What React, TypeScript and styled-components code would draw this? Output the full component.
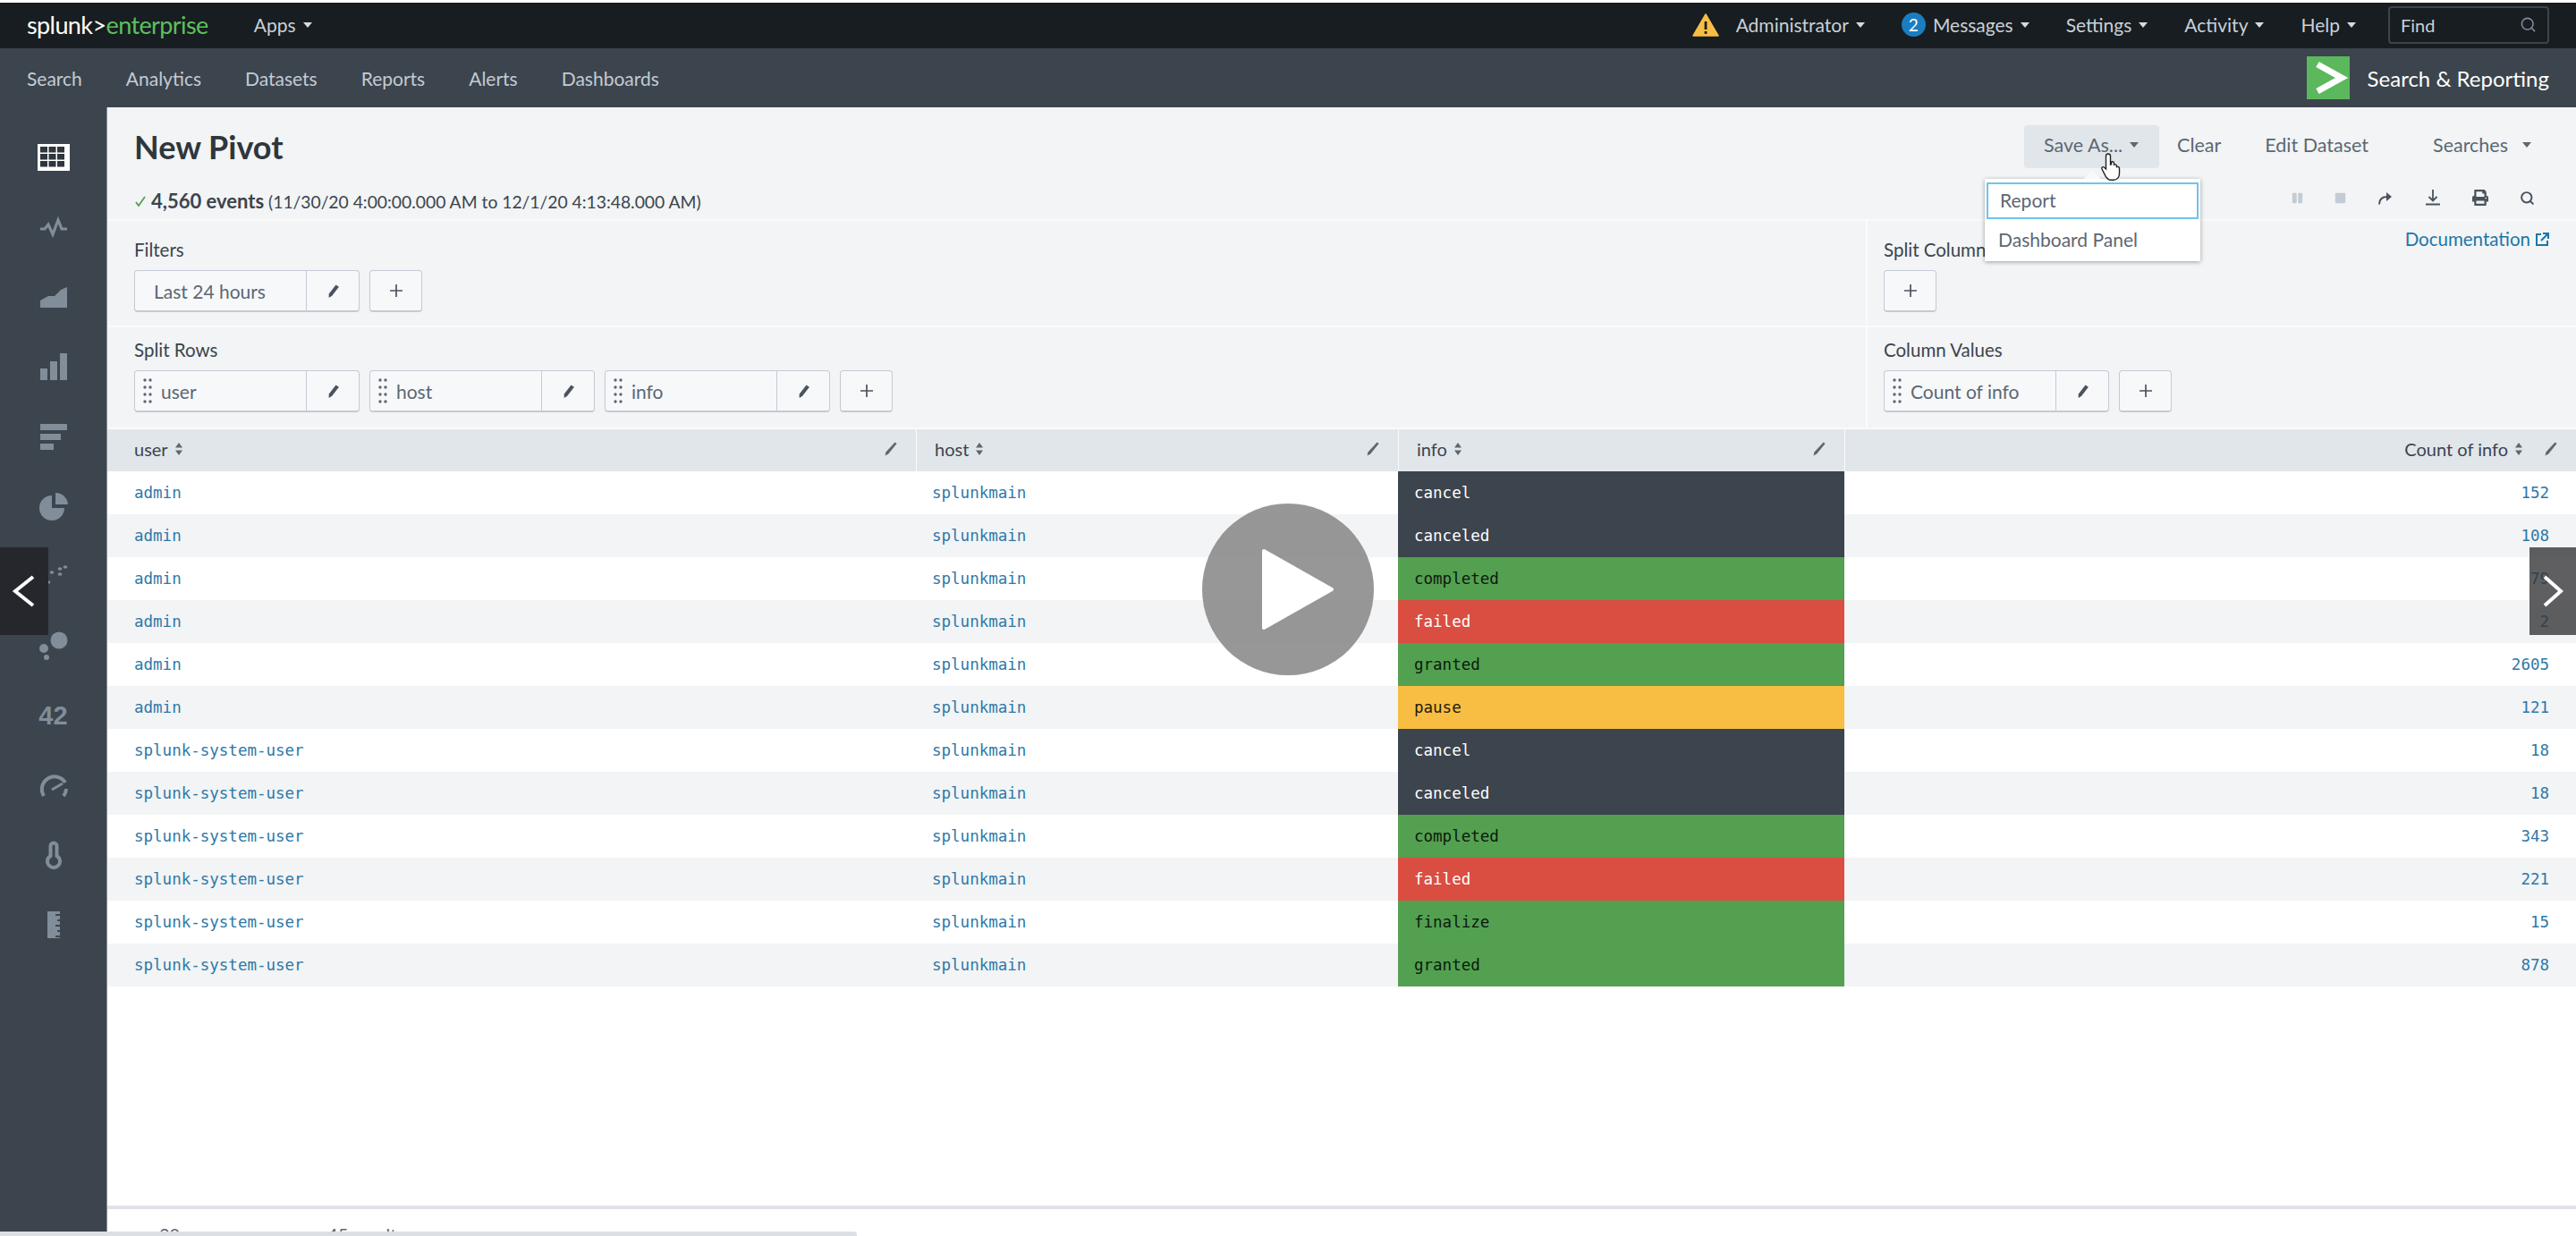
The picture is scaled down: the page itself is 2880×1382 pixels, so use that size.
import * as React from "react"
import styled, { createGlobalStyle } from "styled-components"
import { Search } from "lucide-react"
import { FaPause, FaStop, FaPrint } from "react-icons/fa"

const GlobalStyle = createGlobalStyle`
  html, body {
    margin: 0;
    padding: 0;
    background: #fff;
  }
  body {
    font-family: Lato, "Open Sans", "Liberation Sans", sans-serif;
    color: #3c444d;
  }
`

const Page = styled.div`
  position: relative;
  display: flex;
  flex-direction: column;
  width: 2880px;
  height: 1382px;
  padding-top: 3px;
  box-sizing: border-box;
  overflow: hidden;
  background: #fff;
`

const TopBar = styled.header`
  display: flex;
  align-items: center;
  flex: none;
  height: 51px;
  padding: 0 30px 2px 30px;
  box-sizing: border-box;
  background: #171d21;
  color: #c9d0d8;
  font-size: 21px;
`

const Logo = styled.div`
  font-size: 27px;
  letter-spacing: -0.6px;
  color: #fff;
  margin-right: 51px;
  & span {
    color: #5cc05c;
  }
`

const MenuItem = styled.div<{ $gap?: number }>`
  display: flex;
  align-items: center;
  gap: 8px;
  margin-right: ${p => p.$gap ?? 41}px;
`

const Caret = styled.i<{ $color?: string }>`
  display: inline-block;
  width: 0;
  height: 0;
  border-left: 5px solid transparent;
  border-right: 5px solid transparent;
  border-top: 6px solid ${p => p.$color ?? "#d5dae0"};
`

const Spacer = styled.div`
  flex: 1;
`

const Badge = styled.span`
  display: flex;
  align-items: center;
  justify-content: center;
  width: 27px;
  height: 27px;
  border-radius: 50%;
  background: #1a7dc0;
  color: #fff;
  font-size: 19px;
`

const FindBox = styled.div`
  display: flex;
  align-items: center;
  justify-content: space-between;
  width: 180px;
  height: 42px;
  padding: 0 12px;
  box-sizing: border-box;
  border: 2px solid #3c444d;
  border-radius: 4px;
  color: #c9d0d8;
  font-size: 20px;
`

const AppBar = styled.nav`
  display: flex;
  align-items: center;
  flex: none;
  height: 66px;
  padding: 0 30px;
  background: #3c444d;
  color: #c3cbd4;
  font-size: 21px;
`

const NavLink = styled.a`
  margin-right: 49px;
`

const AppTitle = styled.div`
  display: flex;
  align-items: center;
  gap: 20px;
  color: #fff;
  font-size: 24px;
`

const Body = styled.div`
  display: flex;
  flex: 1;
  min-height: 0;
`

const Rail = styled.aside`
  display: flex;
  flex-direction: column;
  align-items: center;
  flex: none;
  width: 120px;
  padding-top: 17px;
  box-sizing: border-box;
  background: #3c444d;
  border-right: 1px solid #8a929a;
`

const RailItem = styled.div`
  display: flex;
  align-items: center;
  justify-content: center;
  flex: none;
  width: 100%;
  height: 78px;
  color: #818d99;
`

const RailNumber = styled.span`
  font-family: "Liberation Sans", sans-serif;
  font-size: 29px;
  font-weight: 700;
`

const Main = styled.main`
  display: flex;
  flex-direction: column;
  flex: 1;
  min-width: 0;
`

const Header = styled.section`
  flex: none;
  height: 127px;
  padding: 20px 0 0 30px;
  box-sizing: border-box;
  background: #f2f4f5;
  border-bottom: 2px solid #fafbfb;
`

const HeaderRow = styled.div`
  display: flex;
  align-items: center;
  justify-content: space-between;
`

const Title = styled.h1`
  margin: 0;
  font-size: 36px;
  font-weight: 700;
  color: #2f363d;
`

const Actions = styled.div`
  display: flex;
  align-items: center;
  height: 48px;
  padding-right: 50px;
  font-size: 21.5px;
  color: #5c6773;
`

const SaveWrap = styled.div`
  position: relative;
`

const SaveButton = styled.button`
  display: flex;
  align-items: center;
  gap: 8px;
  width: 151px;
  height: 48px;
  padding: 0 0 4px 22px;
  border: 0;
  border-radius: 4px;
  background: #e1e6eb;
  font: inherit;
  color: inherit;
`

const ActionLink = styled.a<{ $left: number }>`
  display: flex;
  align-items: center;
  gap: 16px;
  margin-left: ${p => p.$left}px;
  padding-bottom: 4px;
`

const Menu = styled.div`
  position: absolute;
  top: 60px;
  left: -44px;
  z-index: 5;
  width: 241px;
  height: 92px;
  padding-top: 4px;
  box-sizing: border-box;
  background: #fff;
  box-shadow: 0 1px 5px rgba(0, 0, 0, 0.35);
  &::before {
    content: "";
    position: absolute;
    top: -9px;
    left: 110px;
    border-left: 10px solid transparent;
    border-right: 10px solid transparent;
    border-bottom: 9px solid #f8f9fa;
  }
`

const MenuEntry = styled.div<{ $focused?: boolean }>`
  display: flex;
  align-items: center;
  height: ${p => (p.$focused ? 41 : 46)}px;
  margin: 0 2px;
  padding: 0 0 2px 13px;
  box-sizing: border-box;
  font-size: 21px;
  color: #5c6773;
  border: ${p => (p.$focused ? "2px solid #6cc5ee" : "0")};
`

const Pointer = styled.svg`
  position: absolute;
  top: 30px;
  left: 85px;
  z-index: 6;
  width: 28px;
  height: 34px;
`

const StatusRow = styled.div`
  display: flex;
  justify-content: space-between;
`

const Status = styled.div`
  display: flex;
  align-items: center;
  gap: 5px;
  margin-top: 23px;
  font-size: 19.3px;
  color: #3c444d;
  & b {
    font-size: 22px;
    font-weight: 700;
  }
`

const JobIcons = styled.div`
  display: flex;
  align-items: center;
  height: 32px;
  padding-right: 28px;
  margin-top: 17px;
`

const JobIcon = styled.div<{ $muted?: boolean; $width?: number }>`
  display: flex;
  justify-content: center;
  width: ${p => p.$width ?? 53}px;
  color: ${p => (p.$muted ? "#c3cbd4" : "#4a535d")};
`

const PanelRow = styled.section<{ $height: number }>`
  display: flex;
  flex: none;
  height: ${p => p.$height}px;
  box-sizing: border-box;
  background: #f2f4f5;
  border-bottom: 2px solid #fafbfb;
`

const PanelLeft = styled.div<{ $top: number }>`
  flex: none;
  width: 1968px;
  padding: ${p => p.$top}px 0 0 30px;
  box-sizing: border-box;
  border-right: 2px solid #fafbfb;
`

const PanelRight = styled.div<{ $top: number }>`
  display: flex;
  justify-content: space-between;
  flex: 1;
  padding: ${p => p.$top}px 30px 0 18px;
`

const PanelLabel = styled.div`
  height: 24px;
  margin-bottom: 11px;
  font-size: 20.5px;
  line-height: 24px;
  color: #3c444d;
`

const DocLink = styled.a`
  display: flex;
  align-items: center;
  gap: 6px;
  height: 24px;
  margin-top: -12px;
  font-size: 20.5px;
  color: #1e76a8;
`

const PillRow = styled.div`
  display: flex;
  gap: 11px;
`

const Pill = styled.div<{ $width?: number }>`
  display: flex;
  align-items: stretch;
  width: ${p => p.$width ?? 252}px;
  height: 47px;
  box-sizing: border-box;
  background: #f7f8fa;
  border: 1px solid #c3cbd4;
  border-bottom-width: 2px;
  border-radius: 4px;
  font-size: 21px;
  color: #5c6773;
`

const PillLabel = styled.div<{ $indent?: boolean }>`
  display: flex;
  align-items: center;
  gap: 10px;
  flex: 1;
  padding-left: ${p => (p.$indent ? 21 : 9)}px;
`

const PillEdit = styled.div`
  display: flex;
  align-items: center;
  justify-content: center;
  flex: none;
  width: 58px;
  border-left: 1px solid #c3cbd4;
  color: #4a535d;
`

const AddButton = styled(Pill)`
  align-items: center;
  justify-content: center;
  width: 59px;
  color: #4a535d;
`

const Table = styled.div`
  flex: none;
`

const columns = "904px 539px 499px 818px"

const HeadRow = styled.div`
  display: grid;
  grid-template-columns: ${columns};
  height: 47px;
  background: #e1e6eb;
  font-size: 20px;
  color: #3c444d;
`

const HeadCell = styled.div<{ $first?: boolean; $end?: boolean }>`
  display: flex;
  align-items: center;
  gap: 7px;
  padding: 0 20px 4px ${p => (p.$first ? 30 : 20)}px;
  box-sizing: border-box;
  border-left: ${p => (p.$first ? "0" : "1px solid #fafbfb")};
  justify-content: ${p => (p.$end ? "flex-end" : "flex-start")};
`

const HeadEdit = styled.span<{ $end?: boolean }>`
  display: flex;
  margin-left: ${p => (p.$end ? "16px" : "auto")};
  color: #5c6773;
`

const Row = styled.div<{ $alt: boolean }>`
  display: grid;
  grid-template-columns: ${columns};
  height: 48px;
  background: ${p => (p.$alt ? "#f2f4f5" : "#fff")};
  font-family: "DejaVu Sans Mono", "Liberation Mono", monospace;
  font-size: 17.5px;
`

const Cell = styled.div<{ $first?: boolean }>`
  display: flex;
  align-items: center;
  padding-left: ${p => (p.$first ? 30 : 18)}px;
  color: #2e78a8;
`

const tones = {
  dark: { bg: "#3c444d", fg: "#fff" },
  green: { bg: "#53a051", fg: "#0c1a0c" },
  red: { bg: "#d94e41", fg: "#fff" },
  yellow: { bg: "#f8be44", fg: "#1f1a08" },
}

type Tone = keyof typeof tones

const StatusCell = styled.div<{ $tone: Tone }>`
  display: flex;
  align-items: center;
  padding-left: 18px;
  background: ${p => tones[p.$tone].bg};
  color: ${p => tones[p.$tone].fg};
`

const CountCell = styled.div`
  display: flex;
  align-items: center;
  justify-content: flex-end;
  padding-right: 30px;
  color: #2e78a8;
`

const Gap = styled.div`
  flex: 1;
  background: #fff;
`

const Footer = styled.footer`
  display: flex;
  flex: none;
  height: 34px;
  padding: 16px 0 0 58px;
  box-sizing: border-box;
  border-top: 4px solid #dfe2e6;
  font-size: 20px;
  line-height: 24px;
  color: #5c6773;
  gap: 84px;
`

const ScrollThumb = styled.div`
  position: absolute;
  left: 0;
  bottom: 0;
  z-index: 7;
  width: 958px;
  height: 5px;
  border-radius: 0 4px 0 0;
  background: #dcdfe3;
`

const SlideNav = styled.button<{ $side: "left" | "right" }>`
  position: absolute;
  top: 612px;
  ${p => p.$side}: 0;
  z-index: 8;
  display: flex;
  align-items: center;
  justify-content: center;
  width: ${p => (p.$side === "left" ? 54 : 52)}px;
  height: 98px;
  padding: 0;
  border: 0;
  background: ${p => (p.$side === "left" ? "#26272c" : "rgba(50, 50, 52, 0.78)")};
`

const PlayButton = styled.div`
  position: absolute;
  top: 563px;
  left: 1344px;
  z-index: 8;
  display: flex;
  align-items: center;
  justify-content: center;
  width: 192px;
  height: 192px;
  padding-left: 22px;
  box-sizing: border-box;
  border-radius: 50%;
  background: rgba(140, 140, 140, 0.9);
`

const PencilIcon = () => (
  <svg width="17" height="17" viewBox="0 0 18 18" fill="currentColor">
    <path d="M12.200 1.600l3.600 2.400-8.200 10.600-3.400 2.200-.4-.3.2-4.200z" />
  </svg>
)

const ThinPencil = () => (
  <svg width="16" height="18" viewBox="0 0 16 18" fill="currentColor">
    <path d="M12.600 1.400l2 1.600-9.400 11.400-3.600 2.200.8-4z" />
  </svg>
)

const PlusIcon = () => (
  <svg width="14" height="14" viewBox="0 0 14 14" fill="none" stroke="currentColor" strokeWidth="1.700">
    <path d="M7 0v14M0 7h14" />
  </svg>
)

const GripIcon = () => (
  <svg width="10" height="29" viewBox="0 0 10 29" fill="#5c6773">
    {[2, 10, 18, 26].map(y => (
      <React.Fragment key={y}>
        <circle cx="2" cy={y} r="1.700" />
        <circle cx="8" cy={y} r="1.700" />
      </React.Fragment>
    ))}
  </svg>
)

const SortIcon = () => (
  <svg width="10" height="16" viewBox="0 0 10 16" fill="#5c6773">
    <path d="M5 1l4 5.500H1zM5 15L1 9.500h8z" />
  </svg>
)

const railIcons: React.ReactNode[] = [
  <svg key="table" width="36" height="30" viewBox="0 0 36 30">
    <rect width="36" height="30" fill="#fff" />
    {[3, 12.5, 22].map(x =>
      [3, 11, 19].map(y => <rect key={`${x}-${y}`} x={x} y={y} width="8" height="6.500" fill="#2f363d" />)
    )}
  </svg>,
  <svg key="line" width="32" height="24" viewBox="0 0 32 24" fill="none" stroke="currentColor" strokeWidth="3.200">
    <path d="M1 14h5l4-5 5 11 6-16 4 10h6" />
  </svg>,
  <svg key="area" width="32" height="25" viewBox="0 0 32 25" fill="currentColor">
    <path d="M1 24v-8l9-5h7l7-7 7-3v23z" />
  </svg>,
  <svg key="bars" width="32" height="32" viewBox="0 0 32 32" fill="currentColor">
    <rect x="1" y="18" width="8" height="13" />
    <rect x="12" y="10" width="8" height="21" />
    <rect x="23" y="1" width="8" height="30" />
  </svg>,
  <svg key="hbars" width="32" height="30" viewBox="0 0 32 30" fill="currentColor">
    <rect x="1" y="1" width="30" height="7" />
    <rect x="1" y="12" width="23" height="7" />
    <rect x="1" y="23" width="15" height="7" />
  </svg>,
  <svg key="pie" width="34" height="32" viewBox="0 0 34 32" fill="currentColor">
    <path d="M15 4A14 14 0 1 0 29 18H15z" />
    <path d="M19 1a14 14 0 0 1 14 13H19z" />
  </svg>,
  <svg key="scatter" width="34" height="26" viewBox="0 0 34 26" fill="currentColor">
    {[[30, 3], [24, 5], [15, 9], [24, 11], [9, 13], [3, 17], [11, 20], [7, 24]].map(([x, y]) => (
      <ellipse key={`${x}-${y}`} cx={x} cy={y} rx="2.400" ry="1.800" />
    ))}
  </svg>,
  <svg key="bubble" width="34" height="32" viewBox="0 0 34 32" fill="currentColor">
    <circle cx="23" cy="10" r="9.500" />
    <circle cx="6" cy="19" r="5" />
    <circle cx="9" cy="29" r="3" />
  </svg>,
  <svg key="gauge" width="34" height="28" viewBox="0 0 34 28" fill="none" stroke="currentColor" strokeWidth="4">
    <path d="M6 26A14 14 0 0 1 30 11" />
    <path d="M31 18a14 14 0 0 1-3 8" />
    <path d="M15 19l12-7" strokeWidth="3" />
  </svg>,
  <svg key="thermo" width="20" height="32" viewBox="0 0 20 32" fill="none" stroke="currentColor" strokeWidth="4">
    <path d="M6.500 17V6a3.500 3.500 0 0 1 7 0v11a7 7 0 1 1-7 0z" />
  </svg>,
  <svg key="ruler" width="14" height="30" viewBox="0 0 14 30" fill="currentColor">
    <path d="M0 0h14v3H9v2h5v4h-3v2h3v4H9v2h5v4h-3v2h3v4H9v2h5v1H0z" />
  </svg>,
]

const rows: { user: string; status: string; tone: Tone; count: number }[] = [
  { user: "admin", status: "cancel", tone: "dark", count: 152 },
  { user: "admin", status: "canceled", tone: "dark", count: 108 },
  { user: "admin", status: "completed", tone: "green", count: 79 },
  { user: "admin", status: "failed", tone: "red", count: 2 },
  { user: "admin", status: "granted", tone: "green", count: 2605 },
  { user: "admin", status: "pause", tone: "yellow", count: 121 },
  { user: "splunk-system-user", status: "cancel", tone: "dark", count: 18 },
  { user: "splunk-system-user", status: "canceled", tone: "dark", count: 18 },
  { user: "splunk-system-user", status: "completed", tone: "green", count: 343 },
  { user: "splunk-system-user", status: "failed", tone: "red", count: 221 },
  { user: "splunk-system-user", status: "finalize", tone: "green", count: 15 },
  { user: "splunk-system-user", status: "granted", tone: "green", count: 878 },
]

const FieldPill = ({ label }: { label: string }) => (
  <Pill>
    <PillLabel>
      <GripIcon />
      {label}
    </PillLabel>
    <PillEdit>
      <PencilIcon />
    </PillEdit>
  </Pill>
)

const App: React.FC = () => (
  <Page>
    <GlobalStyle />
    <TopBar>
      <Logo>
        splunk&gt;<span>enterprise</span>
      </Logo>
      <MenuItem $gap={0}>
        Apps <Caret />
      </MenuItem>
      <Spacer />
      <MenuItem $gap={19}>
        <svg width="30" height="26" viewBox="0 0 30 26">
          <path d="M15 1l14 24H1z" fill="#f8be44" stroke="#f8be44" strokeWidth="1.500" strokeLinejoin="round" />
          <rect x="13.600" y="9" width="2.800" height="9" fill="#171d21" />
          <rect x="13.600" y="20" width="2.800" height="2.800" fill="#171d21" />
        </svg>
      </MenuItem>
      <MenuItem>
        Administrator <Caret />
      </MenuItem>
      <MenuItem>
        <Badge>2</Badge>
        Messages <Caret />
      </MenuItem>
      <MenuItem>
        Settings <Caret />
      </MenuItem>
      <MenuItem>
        Activity <Caret />
      </MenuItem>
      <MenuItem $gap={36}>
        Help <Caret />
      </MenuItem>
      <FindBox>
        Find
        <Search size={19} color="#818d99" />
      </FindBox>
    </TopBar>
    <AppBar>
      <NavLink>Search</NavLink>
      <NavLink>Analytics</NavLink>
      <NavLink>Datasets</NavLink>
      <NavLink>Reports</NavLink>
      <NavLink>Alerts</NavLink>
      <NavLink>Dashboards</NavLink>
      <Spacer />
      <AppTitle>
        <svg width="48" height="48" viewBox="0 0 48 48">
          <rect width="48" height="48" fill="#5cb85c" />
          <path d="M12 9l27 15-27 15" fill="none" stroke="#fff" strokeWidth="7" />
        </svg>
        Search &amp; Reporting
      </AppTitle>
    </AppBar>
    <Body>
      <Rail>
        {railIcons.slice(0, 8).map((icon, i) => (
          <RailItem key={i}>{icon}</RailItem>
        ))}
        <RailItem>
          <RailNumber>42</RailNumber>
        </RailItem>
        {railIcons.slice(8).map((icon, i) => (
          <RailItem key={i}>{icon}</RailItem>
        ))}
      </Rail>
      <Main>
        <Header>
          <HeaderRow>
            <Title>New Pivot</Title>
            <Actions>
              <SaveWrap>
                <SaveButton>
                  Save As... <Caret $color="#5c6773" />
                </SaveButton>
                <Pointer viewBox="0 0 28 34">
                  <path
                    d="M9 2c1.500 0 2.500 1 2.500 2.500V14l1-.3V11c1.800-.8 3 0 3 1.500v1.700c1.600-.8 3 0 3 1.500v1c1.600-.7 3 0 3 1.600v6c0 3.500-2.500 7-6.500 7H12c-3 0-4.500-2-6-4.500L2 19c-.8-1.500.8-3 2.300-2L6.500 19V4.500C6.500 3 7.500 2 9 2z"
                    fill="#fff"
                    stroke="#222"
                    strokeWidth="1.400"
                  />
                </Pointer>
                <Menu>
                  <MenuEntry $focused>Report</MenuEntry>
                  <MenuEntry>Dashboard Panel</MenuEntry>
                </Menu>
              </SaveWrap>
              <ActionLink $left={20}>Clear</ActionLink>
              <ActionLink $left={49}>Edit Dataset</ActionLink>
              <ActionLink $left={72}>
                Searches <Caret $color="#5c6773" />
              </ActionLink>
            </Actions>
          </HeaderRow>
          <StatusRow>
            <Status>
              <svg width="14" height="14" viewBox="0 0 14 14" fill="none" stroke="#53a051" strokeWidth="1.800">
                <path d="M2 8l3 4 7-10" />
              </svg>
              <span>
                <b>4,560 events</b> (11/30/20 4:00:00.000 AM to 12/1/20 4:13:48.000 AM)
              </span>
            </Status>
            <JobIcons>
              <JobIcon $muted $width={48}>
                <FaPause size={13} />
              </JobIcon>
              <JobIcon $muted $width={48}>
                <FaStop size={13} />
              </JobIcon>
              <JobIcon>
                <svg width="18" height="16" viewBox="0 0 18 16" fill="none" stroke="currentColor" strokeWidth="2">
                  <path d="M2 15.500c0-5.500 3-8.500 9-8.500" />
                  <path d="M10 2l6 5-6 5z" fill="currentColor" stroke="none" />
                </svg>
              </JobIcon>
              <JobIcon>
                <svg width="16" height="18" viewBox="0 0 16 18" fill="none" stroke="currentColor" strokeWidth="1.800">
                  <path d="M8 0v12M3.500 8L8 12.500 12.500 8M0 16.500h16" />
                </svg>
              </JobIcon>
              <JobIcon>
                <FaPrint size={18} />
              </JobIcon>
              <JobIcon>
                <Search size={17} strokeWidth={2.800} />
              </JobIcon>
            </JobIcons>
          </StatusRow>
        </Header>
        <PanelRow $height={119}>
          <PanelLeft $top={20}>
            <PanelLabel>Filters</PanelLabel>
            <PillRow>
              <Pill>
                <PillLabel $indent>Last 24 hours</PillLabel>
                <PillEdit>
                  <PencilIcon />
                </PillEdit>
              </Pill>
              <AddButton>
                <PlusIcon />
              </AddButton>
            </PillRow>
          </PanelLeft>
          <PanelRight $top={20}>
            <div>
              <PanelLabel>Split Columns</PanelLabel>
              <AddButton>
                <PlusIcon />
              </AddButton>
            </div>
            <DocLink>
              Documentation
              <svg width="15" height="15" viewBox="0 0 15 15" fill="none" stroke="currentColor" strokeWidth="2">
                <path d="M6 2H1v12h12V9M8 1h6v6M14 1L6 9" />
              </svg>
            </DocLink>
          </PanelRight>
        </PanelRow>
        <PanelRow $height={114}>
          <PanelLeft $top={13}>
            <PanelLabel>Split Rows</PanelLabel>
            <PillRow>
              <FieldPill label="user" />
              <FieldPill label="host" />
              <FieldPill label="info" />
              <AddButton>
                <PlusIcon />
              </AddButton>
            </PillRow>
          </PanelLeft>
          <PanelRight $top={13}>
            <div>
              <PanelLabel>Column Values</PanelLabel>
              <PillRow>
                <FieldPill label="Count of info" />
                <AddButton>
                  <PlusIcon />
                </AddButton>
              </PillRow>
            </div>
          </PanelRight>
        </PanelRow>
        <Table>
          <HeadRow>
            <HeadCell $first>
              user <SortIcon />
              <HeadEdit>
                <ThinPencil />
              </HeadEdit>
            </HeadCell>
            <HeadCell>
              host <SortIcon />
              <HeadEdit>
                <ThinPencil />
              </HeadEdit>
            </HeadCell>
            <HeadCell>
              info <SortIcon />
              <HeadEdit>
                <ThinPencil />
              </HeadEdit>
            </HeadCell>
            <HeadCell $end>
              Count of info <SortIcon />
              <HeadEdit $end>
                <ThinPencil />
              </HeadEdit>
            </HeadCell>
          </HeadRow>
          {rows.map((row, i) => (
            <Row key={i} $alt={i % 2 === 1}>
              <Cell $first>{row.user}</Cell>
              <Cell>splunkmain</Cell>
              <StatusCell $tone={row.tone}>{row.status}</StatusCell>
              <CountCell>{row.count}</CountCell>
            </Row>
          ))}
        </Table>
        <Gap />
        <Footer>
          <span>20 per page</span>
          <span>45 results</span>
        </Footer>
      </Main>
    </Body>
    <ScrollThumb />
    <SlideNav $side="left">
      <svg width="30" height="38" viewBox="0 0 30 38" fill="none" stroke="#fff" strokeWidth="4">
        <path d="M25 3L5 19l20 16" />
      </svg>
    </SlideNav>
    <SlideNav $side="right">
      <svg width="24" height="36" viewBox="0 0 24 36" fill="none" stroke="#fff" strokeWidth="4">
        <path d="M3 2l18 16L3 34" />
      </svg>
    </SlideNav>
    <PlayButton>
      <svg width="82" height="92" viewBox="0 0 82 92">
        <path d="M3 3l76 43L3 89z" fill="#fff" stroke="#fff" strokeWidth="4" strokeLinejoin="round" />
      </svg>
    </PlayButton>
  </Page>
)

export default App
